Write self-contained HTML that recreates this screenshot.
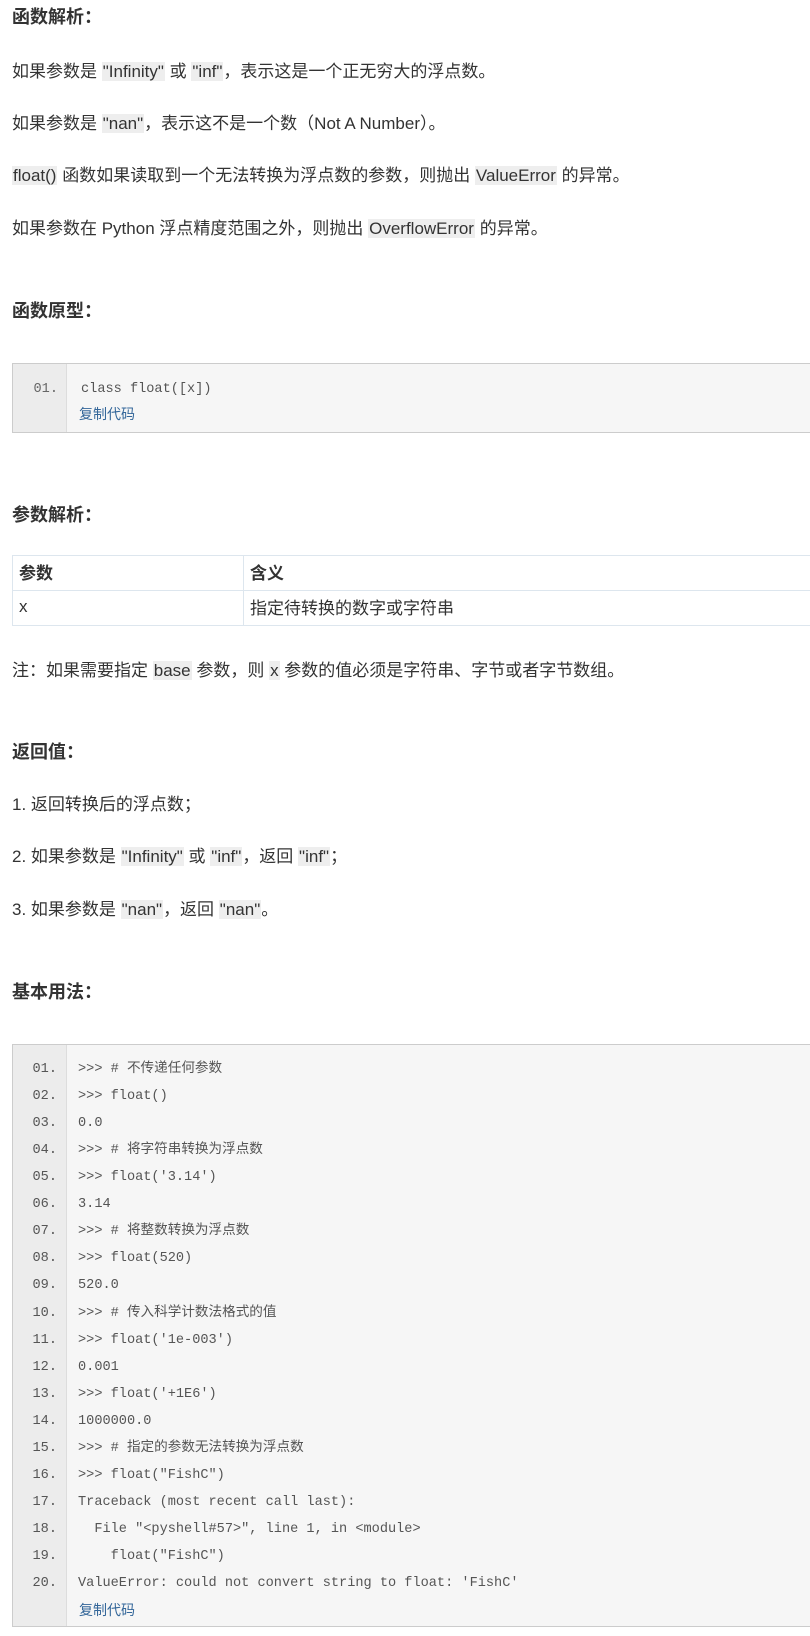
<!DOCTYPE html>
<html><head><meta charset="utf-8"><style>
body{margin:0;width:810px;height:1636px;background:#fff;color:#333;font-family:"Liberation Sans","Noto Sans CJK SC",sans-serif;font-size:17px;position:relative;overflow:hidden}
.a{position:absolute;left:12px;white-space:nowrap;line-height:24px}
h{font-weight:bold;font-size:18px}
c{background:#eee;padding:0 1px}
.box{position:absolute;left:12px;width:820px;background:#f6f6f6;border:1px solid #ccc;box-sizing:border-box}
.g{position:absolute;left:0;top:0;bottom:0;width:53px;background:#ececec;border-right:1px solid #ddd}
.ln{position:absolute;font-family:"Liberation Mono","Noto Sans CJK SC",monospace;font-size:13.6px;color:#555;white-space:pre;line-height:20px}
.n{left:0;width:45px;text-align:right}
.t{left:66px}
.cp{position:absolute;left:66px;color:#336699;font-size:14px;line-height:20px}
table{position:absolute;left:12px;top:555px;width:820px;border-collapse:collapse;font-size:17px}
td{border:1px solid #dde6ee;height:35px;padding:0 6px 3px;box-sizing:border-box}
</style></head><body>
<div class="a" style="top:5px"><h>函数解析：</h></div>
<div class="a" style="top:60px">如果参数是 <c>"Infinity"</c> 或 <c>"inf"</c>，表示这是一个正无穷大的浮点数。</div>
<div class="a" style="top:112px">如果参数是 <c>"nan"</c>，表示这不是一个数（Not A Number）。</div>
<div class="a" style="top:164px"><c>float()</c> 函数如果读取到一个无法转换为浮点数的参数，则抛出 <c>ValueError</c> 的异常。</div>
<div class="a" style="top:217px">如果参数在 Python 浮点精度范围之外，则抛出 <c>OverflowError</c> 的异常。</div>
<div class="a" style="top:299px"><h>函数原型：</h></div>
<div class="box" style="top:363px;height:70px"><div class="g"></div>
<div class="ln n" style="top:16px;color:#666">01.</div><div class="ln t" style="top:16px;left:68px">class float([x])</div>
<div class="cp" style="top:40px;left:66px">复制代码</div></div>
<div class="a" style="top:503px"><h>参数解析：</h></div>
<table><tr><td style="width:231px;font-weight:bold">参数</td><td style="font-weight:bold">含义</td></tr>
<tr><td>x</td><td>指定待转换的数字或字符串</td></tr></table>
<div class="a" style="top:659px">注：如果需要指定 <c>base</c> 参数，则 <c>x</c> 参数的值必须是字符串、字节或者字节数组。</div>
<div class="a" style="top:740px"><h>返回值：</h></div>
<div class="a" style="top:793px">1. 返回转换后的浮点数；</div>
<div class="a" style="top:845px">2. 如果参数是 <c>"Infinity"</c> 或 <c>"inf"</c>，返回 <c>"inf"</c>；</div>
<div class="a" style="top:898px">3. 如果参数是 <c>"nan"</c>，返回 <c>"nan"</c>。</div>
<div class="a" style="top:980px"><h>基本用法：</h></div>
<div class="box" style="top:1044px;height:583px"><div class="g"></div>
<div class="cp" style="top:555px">复制代码</div></div>
<div style="position:absolute;left:12px;top:1044px">
<div class="ln n" style="top:16px">01.</div><div class="ln t" style="top:16px">&gt;&gt;&gt; # 不传递任何参数</div>
<div class="ln n" style="top:43px">02.</div><div class="ln t" style="top:43px">&gt;&gt;&gt; float()</div>
<div class="ln n" style="top:70px">03.</div><div class="ln t" style="top:70px">0.0</div>
<div class="ln n" style="top:97px">04.</div><div class="ln t" style="top:97px">&gt;&gt;&gt; # 将字符串转换为浮点数</div>
<div class="ln n" style="top:124px">05.</div><div class="ln t" style="top:124px">&gt;&gt;&gt; float('3.14')</div>
<div class="ln n" style="top:151px">06.</div><div class="ln t" style="top:151px">3.14</div>
<div class="ln n" style="top:178px">07.</div><div class="ln t" style="top:178px">&gt;&gt;&gt; # 将整数转换为浮点数</div>
<div class="ln n" style="top:205px">08.</div><div class="ln t" style="top:205px">&gt;&gt;&gt; float(520)</div>
<div class="ln n" style="top:232px">09.</div><div class="ln t" style="top:232px">520.0</div>
<div class="ln n" style="top:260px">10.</div><div class="ln t" style="top:260px">&gt;&gt;&gt; # 传入科学计数法格式的值</div>
<div class="ln n" style="top:287px">11.</div><div class="ln t" style="top:287px">&gt;&gt;&gt; float('1e-003')</div>
<div class="ln n" style="top:314px">12.</div><div class="ln t" style="top:314px">0.001</div>
<div class="ln n" style="top:341px">13.</div><div class="ln t" style="top:341px">&gt;&gt;&gt; float('+1E6')</div>
<div class="ln n" style="top:368px">14.</div><div class="ln t" style="top:368px">1000000.0</div>
<div class="ln n" style="top:395px">15.</div><div class="ln t" style="top:395px">&gt;&gt;&gt; # 指定的参数无法转换为浮点数</div>
<div class="ln n" style="top:422px">16.</div><div class="ln t" style="top:422px">&gt;&gt;&gt; float("FishC")</div>
<div class="ln n" style="top:449px">17.</div><div class="ln t" style="top:449px">Traceback (most recent call last):</div>
<div class="ln n" style="top:476px">18.</div><div class="ln t" style="top:476px">  File "&lt;pyshell#57&gt;", line 1, in &lt;module&gt;</div>
<div class="ln n" style="top:503px">19.</div><div class="ln t" style="top:503px">    float("FishC")</div>
<div class="ln n" style="top:530px">20.</div><div class="ln t" style="top:530px">ValueError: could not convert string to float: 'FishC'</div>
</div>
</body></html>
